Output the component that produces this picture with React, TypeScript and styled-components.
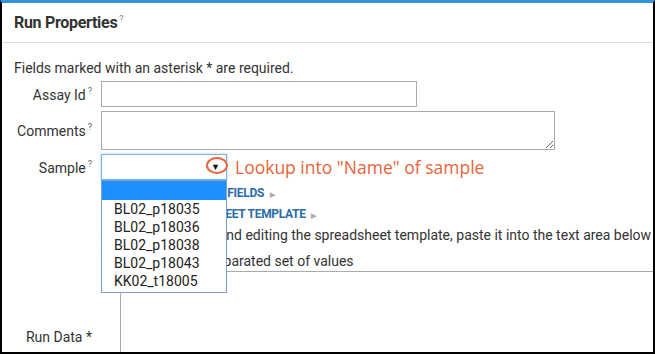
import styled, { createGlobalStyle } from "styled-components";

const GlobalStyle = createGlobalStyle`
  html, body {
    margin: 0;
    padding: 0;
    background: #fff;
  }
  body {
    font-family: Roboto, "Liberation Sans", sans-serif;
    color: #333;
  }
`;

const samples = ["BL02_p18035", "BL02_p18036", "BL02_p18038", "BL02_p18043", "KK02_t18005"];

const App = () => {
  return (
    <>
      <GlobalStyle />
      <SPanel>
        <SHeader>
          <h2>
            Run Properties<sup>?</sup>
          </h2>
        </SHeader>
        <SBody>
          <p className="required">Fields marked with an asterisk * are required.</p>
          <SForm>
            <SLabel>
              Assay Id<sup>?</sup>
            </SLabel>
            <SInput type="text" />
            <SLabel>
              Comments<sup>?</sup>
            </SLabel>
            <STextArea />
            <SLabel>
              Sample<sup>?</sup>
            </SLabel>
            <SSelectCell>
              <SSelect>
                <span className="arrow">▼</span>
              </SSelect>
              <SCallout>
                <span className="ring" />
                Lookup into "Name" of sample
              </SCallout>
              <SOptions>
                <SOption $active />
                {samples.map((s) => (
                  <SOption key={s}>{s}</SOption>
                ))}
              </SOptions>
            </SSelectCell>
            <span />
            <SExtras>
              <SLink>
                SHOW EXPECTED DATA FIELDS <span className="caret">▶</span>
              </SLink>
              <SLink>
                DOWNLOAD SPREADSHEET TEMPLATE <span className="caret">▶</span>
              </SLink>
              <p className="hint">
                After downloading and editing the spreadsheet template, paste it into the text area below
              </p>
              <p className="hint second">Then paste a tab-separated set of values</p>
            </SExtras>
          </SForm>
          <SRunData>
            <SLabel>Run Data *</SLabel>
            <SDataArea />
          </SRunData>
        </SBody>
      </SPanel>
    </>
  );
};
export default App;

const SPanel = styled.div`
  width: 655px;
  height: 354px;
  box-sizing: border-box;
  border-top: 3px solid #3592d4;
  border-left: 2px solid #000;
  border-right: 2px solid #000;
  border-bottom: 2px solid #000;
  overflow: hidden;
  background: #fff;
`;

const SHeader = styled.div`
  height: 39px;
  border-bottom: 1px solid #ddd;
  display: flex;
  align-items: center;
  padding-left: 12px;

  & h2 {
    margin: 0;
    font-size: 16px;
    font-weight: 700;
    color: #333;
    letter-spacing: -0.3px;
  }

  & sup {
    font-size: 9px;
    font-weight: 400;
    color: #7a8a99;
    margin-left: 2px;
  }
`;

const SBody = styled.div`
  padding: 16px 0 0 12px;
  font-size: 14px;

  & .required {
    margin: 0 0 4px 0;
    line-height: 18px;
  }
`;

const SForm = styled.div`
  display: grid;
  grid-template-columns: 78px 1fr;
  column-gap: 9px;
  row-gap: 4px;
  align-items: center;
`;

const SLabel = styled.label`
  width: 78px;
  text-align: right;
  font-size: 14px;
  color: #333;
  white-space: nowrap;
  flex-shrink: 0;

  & sup {
    font-size: 9px;
    color: #666;
    margin-left: 2px;
  }
`;

const SInput = styled.input`
  width: 316px;
  height: 26px;
  box-sizing: border-box;
  border: 1px solid #aaa;
  margin: 0;
`;

const STextArea = styled.textarea`
  width: 454px;
  height: 39px;
  box-sizing: border-box;
  border: 1px solid #aaa;
  margin: 0;
  display: block;
`;

const SSelectCell = styled.div`
  position: relative;
  display: flex;
  align-items: center;
  height: 26px;
`;

const SSelect = styled.div`
  width: 126px;
  height: 26px;
  box-sizing: border-box;
  border: 1px solid #7fb0e2;
  box-shadow: 0 0 3px rgba(102, 175, 233, 0.5);
  display: flex;
  align-items: center;
  justify-content: flex-end;
  padding-right: 6px;

  & .arrow {
    font-size: 9px;
    color: #111;
  }
`;

const SCallout = styled.div`
  position: relative;
  margin-left: 8px;
  font-family: "Open Sans", "Liberation Sans", sans-serif;
  font-size: 17.5px;
  color: #e8643c;
  white-space: nowrap;

  & .ring {
    position: absolute;
    left: -29px;
    top: 2px;
    width: 18px;
    height: 13px;
    border: 2px solid #e8643c;
    border-radius: 50%;
  }
`;

const SOptions = styled.div`
  position: absolute;
  left: 0;
  top: 26px;
  width: 126px;
  box-sizing: border-box;
  border: 1px solid #7b9fd4;
  background: #fff;
  padding-bottom: 2px;
  z-index: 2;
`;

const SOption = styled.div<{ $active?: boolean }>`
  height: ${(p) => (p.$active ? "19px" : "18px")};
  line-height: 18px;
  padding-left: 12px;
  font-size: 14px;
  color: #222;
  background: ${(p) => (p.$active ? "#1e90ff" : "#fff")};
`;

const SExtras = styled.div`
  & .hint {
    margin: 0;
    line-height: 18px;
    white-space: nowrap;
  }
  & .second {
    margin-top: 8px;
  }
`;

const SLink = styled.div`
  font-size: 12px;
  font-weight: 700;
  color: #2a6ca8;
  letter-spacing: -0.3px;
  line-height: 19px;

  & .caret {
    font-size: 7px;
    color: #aaa;
    margin-left: 3px;
  }
`;

const SRunData = styled.div`
  display: flex;
  align-items: center;
  gap: 28px;
  margin-top: 1px;
`;

const SDataArea = styled.textarea`
  width: 560px;
  height: 132px;
  flex-shrink: 0;
  box-sizing: border-box;
  border: 1px solid #aaa;
  margin: 0;
  resize: none;
`;
